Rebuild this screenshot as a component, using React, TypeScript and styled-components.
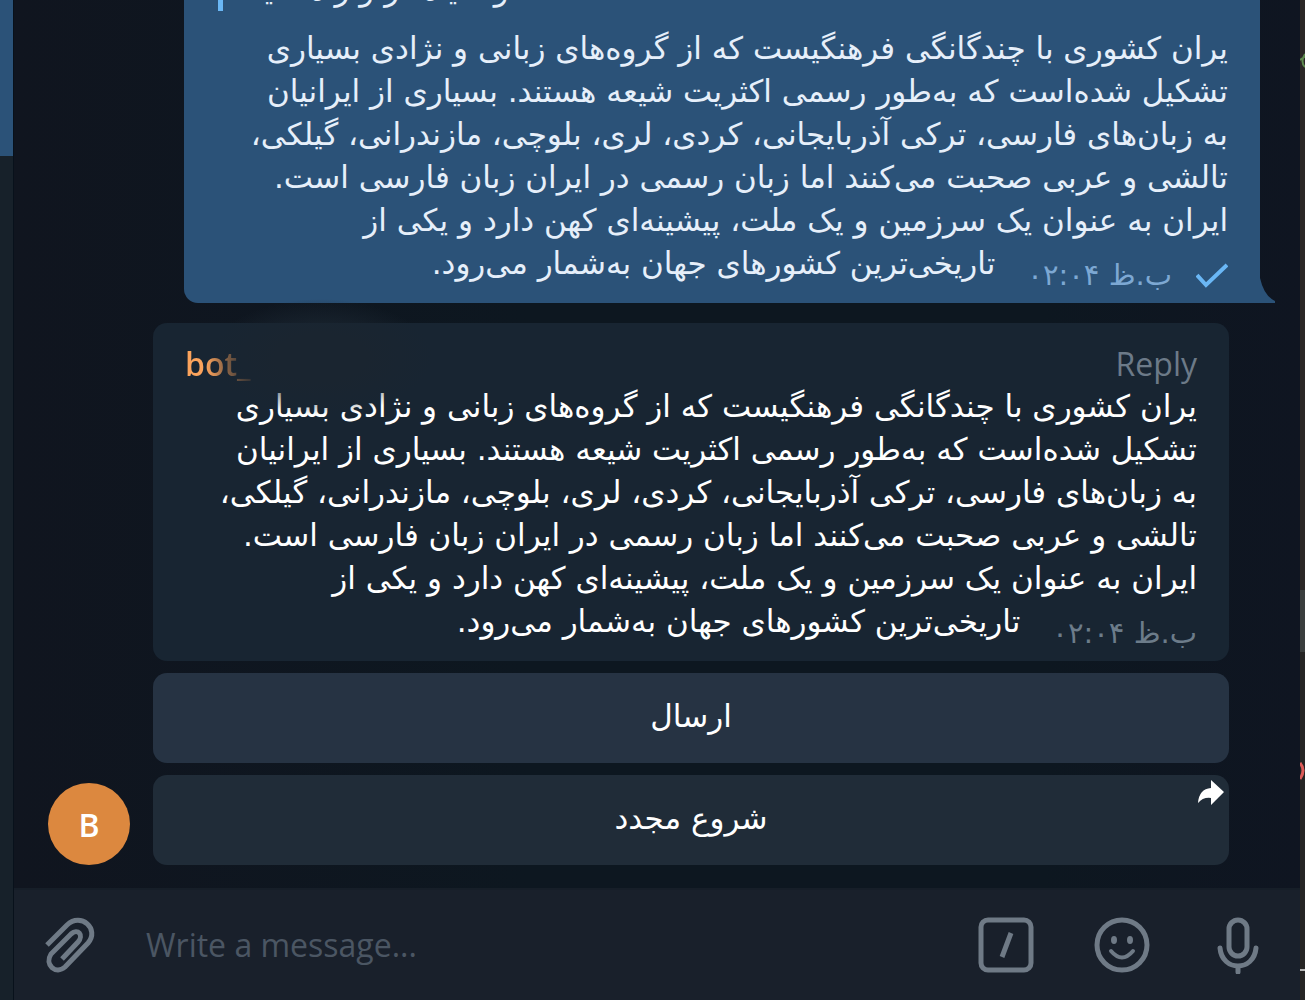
import React from "react";
import styled, { createGlobalStyle } from "styled-components";

const latin = '"Open Sans", "Noto Sans", sans-serif';
const persian = '"DejaVu Sans", sans-serif';

const GlobalStyle = createGlobalStyle`
  * { box-sizing: border-box; }
  body { margin: 0; background: #0f1620; font-family: ${latin}; font-size: 32px; color: #fff; }
  button, input { font: inherit; color: inherit; border: 0; margin: 0; padding: 0; }
`;

const Window = styled.div`
  display: flex;
  height: 100vh;
  overflow: hidden;
`;

const ChatList = styled.aside`
  flex: none;
  width: 14px;
  background: #17212a;
  border-right: 1px solid #08111b;
`;

const ActiveChat = styled.div`
  height: 156px;
  background: #2b5278;
`;

const Desktop = styled.aside`
  flex: none;
  width: 5px;
  overflow: hidden;
  background: linear-gradient(#2b2726 0 590px, #3a3d3d 590px 652px, #262524 652px);
`;

const Main = styled.main`
  flex: 1;
  min-width: 0;
  display: flex;
  flex-direction: column;
`;

const History = styled.section`
  flex: 1;
  min-height: 0;
  display: flex;
  flex-direction: column;
  justify-content: flex-end;
  gap: 20px;
  overflow: hidden;
  padding: 0 40px 23px 34px;
  background: linear-gradient(90deg, #10151f, #0d1720 40%, #0d1720 80%, #0f1521);
`;

const Bubble = styled.article<{ $out?: boolean }>`
  position: relative;
  padding: 19px 32px 6px;
  border-radius: ${(p) => (p.$out ? "14px 14px 0 14px" : "14px")};
  background: ${(p) => (p.$out ? "#2b5278" : "#182532")};
  color: ${(p) => (p.$out ? "#e6effa" : "#fff")};
  margin-left: ${(p) => (p.$out ? "136px" : "0")};
`;

const Tail = styled.svg`
  position: absolute;
  left: 100%;
  bottom: 0;
`;

const Smudge = styled.span`
  position: absolute;
  left: 56px;
  top: -24px;
  width: 224px;
  height: 116px;
  background: radial-gradient(closest-side, #1a2530 40%, rgba(26, 37, 48, 0));
  pointer-events: none;
`;

const Quote = styled.blockquote`
  margin: 0 0 16px 2px;
  padding: 0 32px;
  border-left: 5px solid #6ab7f5;
  direction: rtl;
  text-align: left;
  font: 31px/43px ${persian};
`;

const Header = styled.header`
  display: flex;
  justify-content: space-between;
  line-height: 43px;
`;

const Sender = styled.strong`
  font-weight: 600;
  color: transparent;
  background: linear-gradient(90deg, #fba35c 30%, #4a3f38);
  background-clip: text;
`;

const ReplyButton = styled.button`
  background: none;
  color: #6c7a88;
`;

const Body = styled.div`
  direction: rtl;
  font: 31px/43px ${persian};
  white-space: nowrap;
`;

const Line = styled.div``;

const LastLine = styled.div`
  display: flex;
  align-items: flex-end;
  gap: 32px;
`;

const LastText = styled.span`
  padding-bottom: 12px;
`;

const Meta = styled.span<{ $out?: boolean }>`
  display: flex;
  align-items: center;
  gap: 24px;
  color: ${(p) => (p.$out ? "#7da8d3" : "#6c7c8a")};
  font-size: 29px;
  line-height: 43px;
`;

const Incoming = styled.div`
  display: flex;
  align-items: flex-end;
  gap: 23px;
  padding-right: 31px;
`;

const Avatar = styled.div`
  flex: none;
  width: 82px;
  height: 82px;
  border-radius: 50%;
  background: #dc883f;
  display: grid;
  place-items: center;
  font-weight: 600;
`;

const Stack = styled.div`
  flex: 1;
  min-width: 0;
  display: flex;
  flex-direction: column;
  gap: 12px;
`;

const KeyboardButton = styled.button<{ $light?: boolean }>`
  position: relative;
  height: 90px;
  padding-bottom: 4px;
  border-radius: 14px;
  background: ${(p) => (p.$light ? "#263343" : "#202c38")};
  font: 31px/43px ${persian};
`;

const ShareIcon = styled.svg`
  position: absolute;
  top: 5px;
  right: 5px;
`;

const Composer = styled.form`
  flex: none;
  height: 112px;
  display: flex;
  align-items: center;
  gap: 60px;
  padding: 0 34px 0 28px;
  background: #19202b;
  border-top: 2px solid #161e28;
  color: #6f7a86;
`;

const Field = styled.input`
  flex: 1;
  min-width: 0;
  margin-left: -12px;
  padding-bottom: 2px;
  background: none;
  outline: none;
  &::placeholder { color: #4b5663; opacity: 1; }
`;

const IconButton = styled.button`
  flex: none;
  display: grid;
  background: none;
`;

const lines = [
  "یران کشوری با چندگانگی فرهنگیست که از گروه‌های زبانی و نژادی بسیاری",
  "تشکیل شده‌است که به‌طور رسمی اکثریت شیعه هستند. بسیاری از ایرانیان",
  "به زبان‌های فارسی، ترکی آذربایجانی، کردی، لری، بلوچی، مازندرانی، گیلکی،",
  "تالشی و عربی صحبت می‌کنند اما زبان رسمی در ایران زبان فارسی است.",
  "ایران به عنوان یک سرزمین و یک ملت، پیشینه‌ای کهن دارد و یکی از",
];

function Message({ out }: { out?: boolean }) {
  return (
    <Body lang="fa">
      {lines.map((line) => (
        <Line key={line}>{line}</Line>
      ))}
      <LastLine>
        <Meta $out={out}>
          {out && (
            <svg width="32" height="26" viewBox="0 0 32 26" fill="none" stroke="#6ab7f5" strokeWidth="4" aria-label="Sent">
              <path d="M1 12 10 22 31 2" />
            </svg>
          )}
          <time dateTime="14:04">ب.ظ ۰۲:۰۴</time>
        </Meta>
        <LastText>تاریخی‌ترین کشورهای جهان به‌شمار می‌رود.</LastText>
      </LastLine>
    </Body>
  );
}

export default function App() {
  return (
    <Window>
      <GlobalStyle />
      <ChatList>
        <ActiveChat />
      </ChatList>
      <Main>
        <History>
          <Bubble $out>
            <Quote lang="fa">و سیاه در و راه سیا</Quote>
            <Message out />
            <Tail width="15" height="29" viewBox="0 0 15 29">
              <path d="M0 0V29H15V27Q4 22 0 4Z" fill="#2b5278" />
            </Tail>
          </Bubble>
          <Incoming>
            <Avatar>B</Avatar>
            <Stack>
              <Bubble>
                <Header>
                  <Sender>bot_</Sender>
                  <ReplyButton type="button">Reply</ReplyButton>
                </Header>
                <Message />
                <Smudge />
              </Bubble>
              <KeyboardButton type="button" lang="fa" $light>ارسال</KeyboardButton>
              <KeyboardButton type="button" lang="fa">
                شروع مجدد
                <ShareIcon width="26" height="26" viewBox="0 0 26 26" fill="#fff" aria-hidden="true">
                  <path d="M13 0 26 12 13 25V18Q5 17 0 23Q1 9 13 8Z" />
                </ShareIcon>
              </KeyboardButton>
            </Stack>
          </Incoming>
        </History>
        <Composer>
          <IconButton type="button" aria-label="Attach">
            <svg width="56" height="60" viewBox="0 0 56 60" fill="none" stroke="currentColor" strokeWidth="5">
              <path d="M5 30 25 10C39 -3 58 14 46 28L23 52C14 60 2 50 9 39L29 19C36 13 42 20 36 27L20 44" />
            </svg>
          </IconButton>
          <Field type="text" aria-label="Message" placeholder="Write a message..." />
          <IconButton type="button" aria-label="Commands">
            <svg width="56" height="56" viewBox="0 0 56 56" fill="none" stroke="currentColor" strokeWidth="5">
              <rect x="3" y="3" width="50" height="50" rx="7" />
              <path d="M33 16 24 40" />
            </svg>
          </IconButton>
          <IconButton type="button" aria-label="Emoji">
            <svg width="56" height="56" viewBox="0 0 56 56" fill="none" stroke="currentColor" strokeWidth="5">
              <circle cx="28" cy="28" r="25" />
              <path d="M17 34Q28 47 39 34" strokeWidth="4" strokeLinecap="round" />
              <ellipse cx="20" cy="23" rx="3" ry="4" fill="currentColor" stroke="none" />
              <ellipse cx="36" cy="23" rx="3" ry="4" fill="currentColor" stroke="none" />
            </svg>
          </IconButton>
          <IconButton type="button" aria-label="Record voice">
            <svg width="56" height="58" viewBox="0 0 56 58" fill="none" stroke="currentColor" strokeWidth="5">
              <rect x="19" y="4" width="18" height="36" rx="9" />
              <path d="M10 32C12 56 44 56 46 32M28 50V56" strokeLinecap="round" />
            </svg>
          </IconButton>
        </Composer>
      </Main>
      <Desktop>
        <svg width="5" height="1000" viewBox="0 0 5 1000" fill="none" aria-hidden="true">
          <path d="M0 60 6 56M5 54Q0 62 5 67" stroke="#5f8a4f" strokeWidth="2" />
          <path d="M0 763Q6 770 0 779" stroke="#dd5b59" strokeWidth="3" />
          <path d="M0 970H5" stroke="#b5b5b5" strokeWidth="2" />
        </svg>
      </Desktop>
    </Window>
  );
}
